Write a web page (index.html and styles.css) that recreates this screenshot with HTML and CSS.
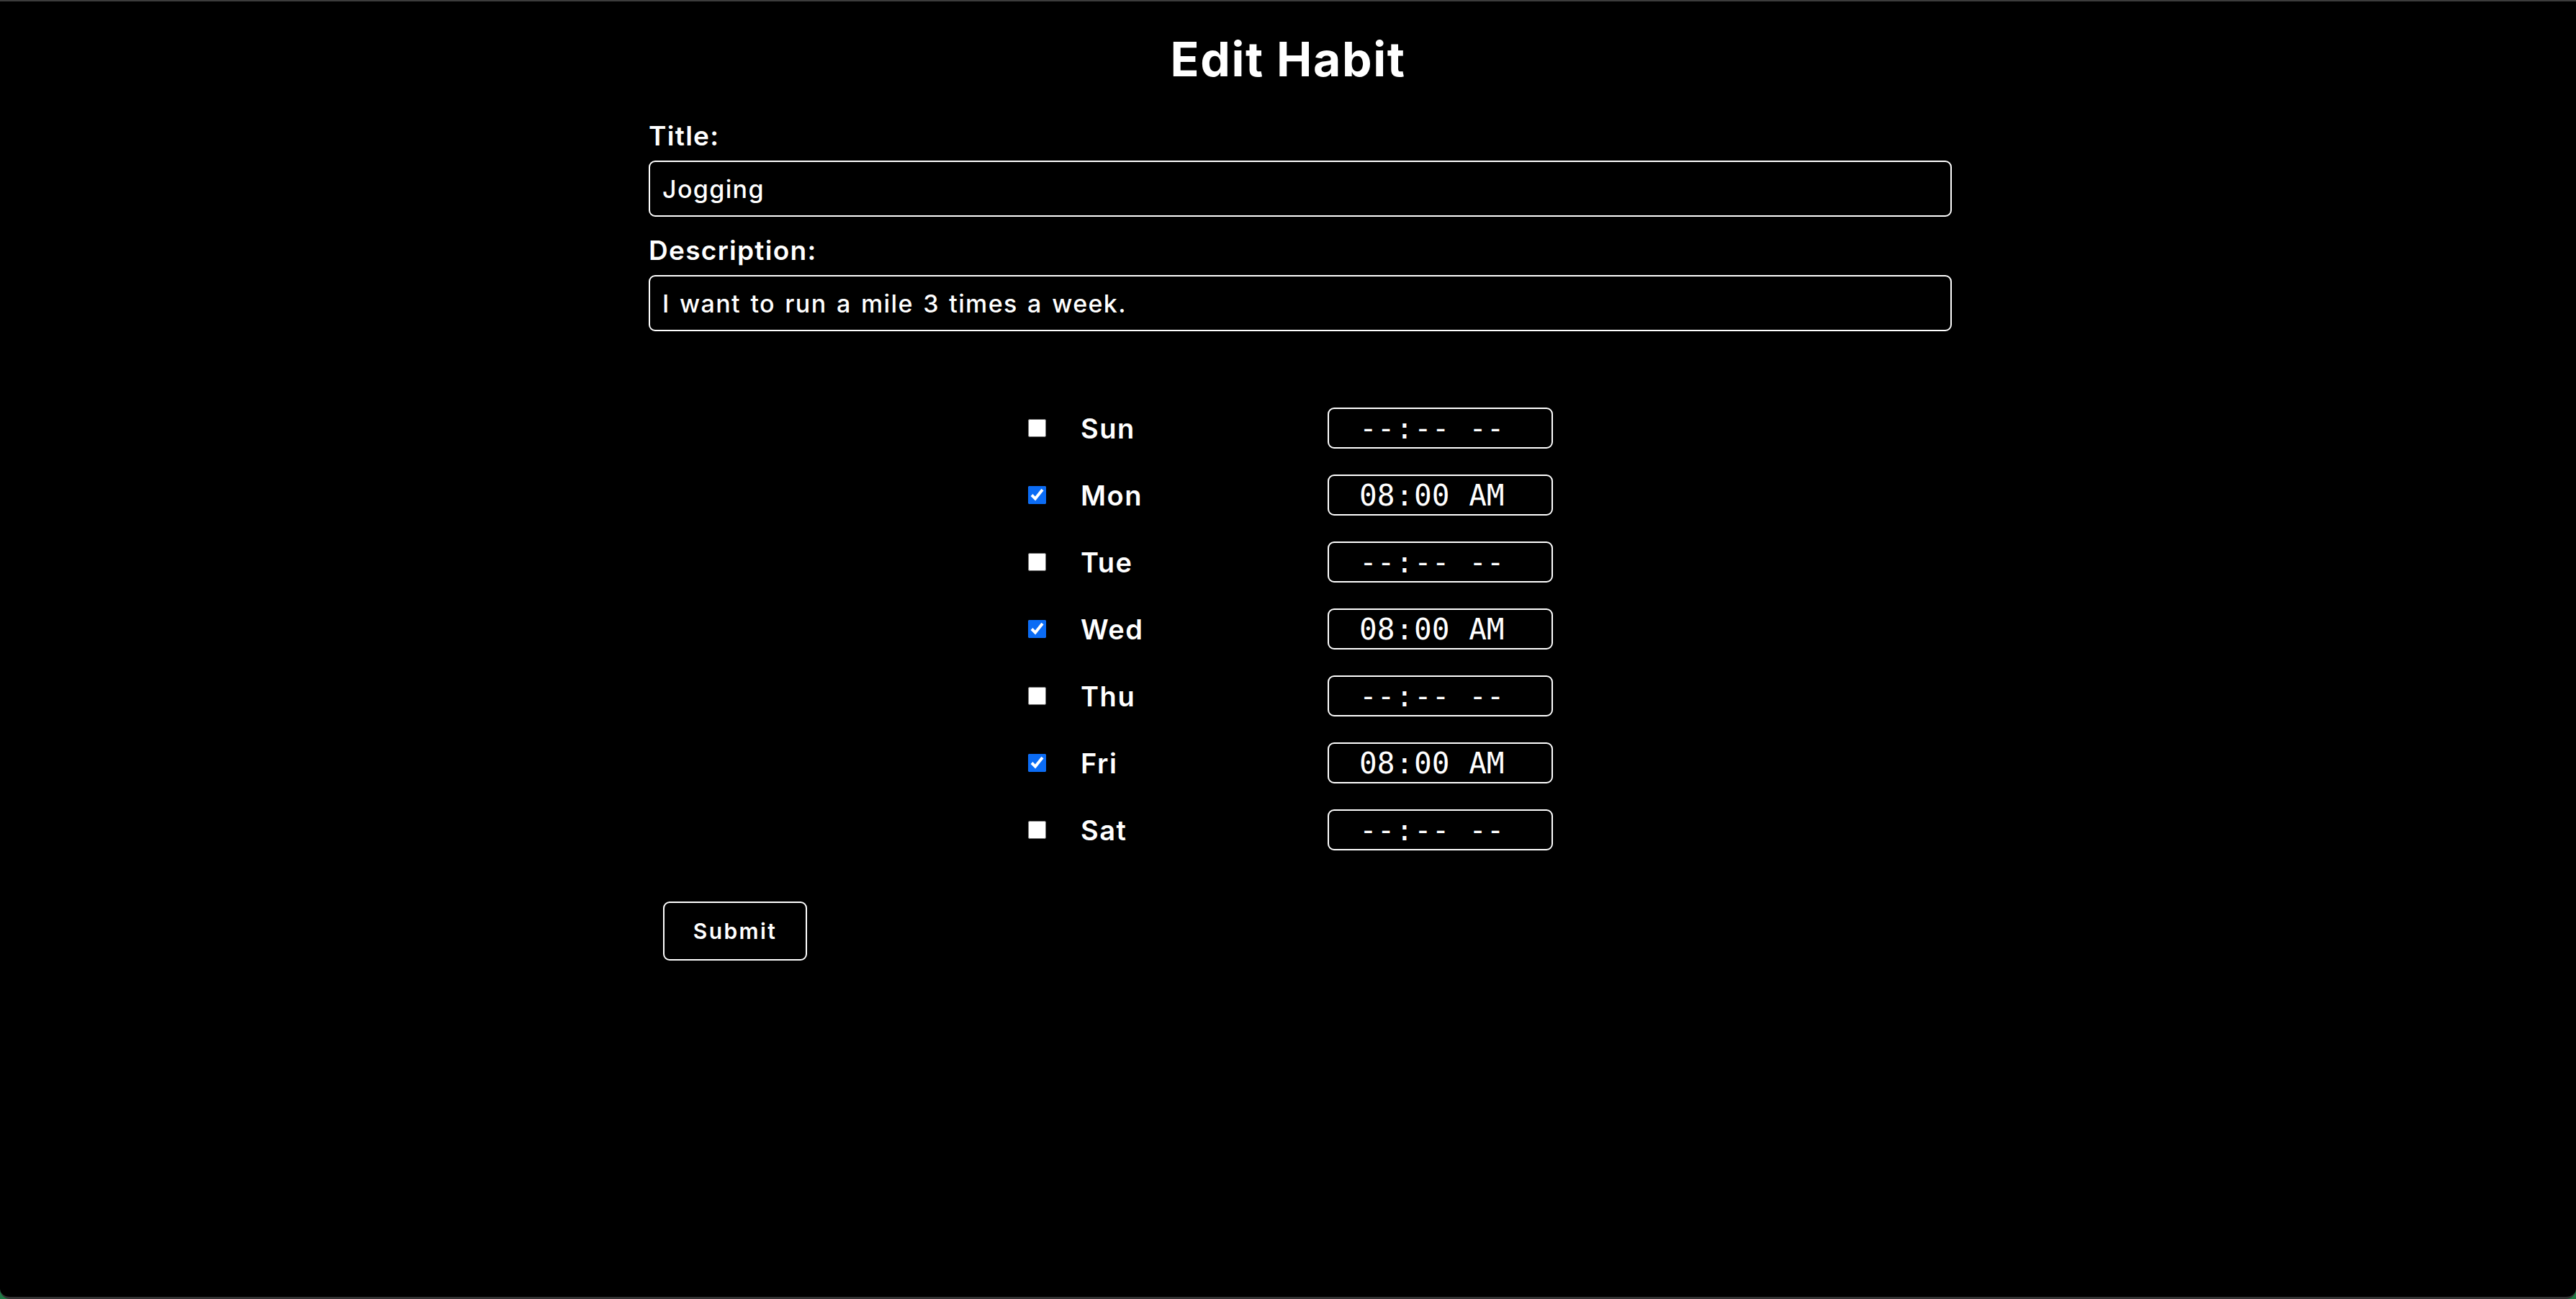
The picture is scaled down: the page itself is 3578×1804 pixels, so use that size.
FILE: index.html
```html
<!DOCTYPE html>
<html lang="en">
<head>
<meta charset="utf-8">
<title>Edit Habit</title>
<link rel="stylesheet" href="styles.css">
</head>
<body>
<main class="page">
  <h1 class="page-title">Edit Habit</h1>
  <form class="habit-form">
    <div class="field field-first">
      <label class="field-label" for="habit-title">Title:</label>
      <input class="text-input" id="habit-title" type="text" value="Jogging">
    </div>
    <div class="field field-next">
      <label class="field-label" for="habit-desc">Description:</label>
      <input class="text-input" id="habit-desc" type="text" value="I want to run a mile 3 times a week.">
    </div>
    <div class="days">
      <div class="day-row">
        <input class="day-check" type="checkbox" id="day-sun">
        <label class="day-name" for="day-sun">Sun</label>
        <input class="time-input" type="time">
      </div>
      <div class="day-row">
        <input class="day-check" type="checkbox" id="day-mon" checked>
        <label class="day-name" for="day-mon">Mon</label>
        <input class="time-input" type="time" value="08:00">
      </div>
      <div class="day-row">
        <input class="day-check" type="checkbox" id="day-tue">
        <label class="day-name" for="day-tue">Tue</label>
        <input class="time-input" type="time">
      </div>
      <div class="day-row">
        <input class="day-check" type="checkbox" id="day-wed" checked>
        <label class="day-name" for="day-wed">Wed</label>
        <input class="time-input" type="time" value="08:00">
      </div>
      <div class="day-row">
        <input class="day-check" type="checkbox" id="day-thu">
        <label class="day-name" for="day-thu">Thu</label>
        <input class="time-input" type="time">
      </div>
      <div class="day-row">
        <input class="day-check" type="checkbox" id="day-fri" checked>
        <label class="day-name" for="day-fri">Fri</label>
        <input class="time-input" type="time" value="08:00">
      </div>
      <div class="day-row">
        <input class="day-check" type="checkbox" id="day-sat">
        <label class="day-name" for="day-sat">Sat</label>
        <input class="time-input" type="time">
      </div>
    </div>
    <button class="submit-btn" type="submit">Submit</button>
  </form>
</main>
</body>
</html>
```

FILE: styles.css
```css
html {
  background: #1e7a44;
  height: 100%;
}

body {
  margin: 0;
  height: 1804px;
  box-sizing: border-box;
  overflow: hidden;
  background: #000;
  color: #fff;
  border-top: 2px solid #3c3c3c;
  border-bottom: 3px solid #333;
  border-radius: 0 0 14px 14px;
  font-family: Inter, "Liberation Sans", sans-serif;
}

.page {
  width: 1844px;
  margin: 0 auto;
}

.page-title {
  margin: 47px 0 0;
  font-size: 66px;
  line-height: 66px;
  font-weight: 700;
  text-align: center;
  letter-spacing: 0.025em;
}

.habit-form {
  display: flex;
  flex-direction: column;
}

.field {
  display: flex;
  flex-direction: column;
  gap: 12px;
  padding-left: 34px;
}

.field-first {
  margin-top: 52px;
}

.field-next {
  margin-top: 25px;
}

.field-label {
  font-size: 37px;
  line-height: 44px;
  font-weight: 600;
  letter-spacing: 0.035em;
}

.text-input {
  box-sizing: border-box;
  height: 78px;
  width: 100%;
  padding: 0 17px;
  background: #000;
  color: #fff;
  border: 2px solid #fff;
  border-radius: 9px;
  font-family: Inter, "Liberation Sans", sans-serif;
  font-size: 34px;
  font-weight: 500;
  letter-spacing: 0.04em;
  word-spacing: 3px;
  outline: none;
}

.days {
  align-self: center;
  margin: 106px 0 0 7px;
  display: flex;
  flex-direction: column;
  gap: 36px;
}

.day-row {
  display: flex;
  align-items: center;
  height: 57px;
}

.day-check {
  width: 25px;
  height: 25px;
  margin: 0 48px 0 0;
  accent-color: #0b6cf5;
}

.day-name {
  width: 343px;
  font-size: 38px;
  line-height: 44px;
  font-weight: 600;
  letter-spacing: 0.04em;
}

.time-input {
  box-sizing: border-box;
  width: 313px;
  height: 57px;
  padding: 0 0 0 41px;
  background: #000;
  color: #fff;
  border: 2px solid #fff;
  border-radius: 9px;
  font-family: "DejaVu Sans Mono", "Liberation Mono", monospace;
  font-size: 41px;
  color-scheme: dark;
  outline: none;
}

.time-input::-webkit-calendar-picker-indicator {
  display: none;
}

.time-input::-webkit-datetime-edit {
  padding: 0;
}

.submit-btn {
  align-self: flex-start;
  margin: 71px 0 0 54px;
  width: 200px;
  height: 82px;
  background: #000;
  color: #fff;
  border: 2px solid #fff;
  border-radius: 9px;
  font-family: Inter, "Liberation Sans", sans-serif;
  font-size: 30px;
  font-weight: 600;
  letter-spacing: 0.08em;
  cursor: pointer;
}
```
